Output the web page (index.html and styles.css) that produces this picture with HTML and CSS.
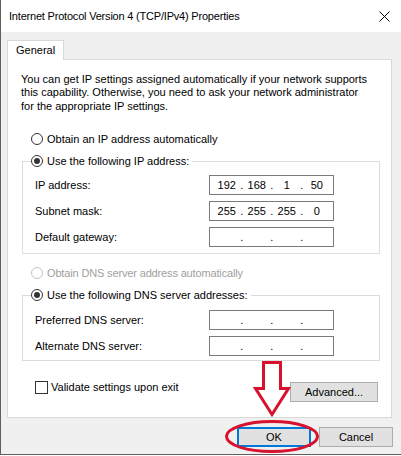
FILE: index.html
```html
<!DOCTYPE html>
<html lang="en">
<head>
  <meta charset="UTF-8">
  <title>Internet Protocol Version 4 (TCP/IPv4) Properties</title>
  <link rel="stylesheet" href="styles.css">
</head>
<body>

  <div class="window">
    <div class="titlebar">
      <span class="title">Internet Protocol Version 4 (TCP/IPv4) Properties</span>
      <svg class="close" width="11" height="11" viewBox="0 0 11 11">
        <path d="M0.5 0.5 L10.5 10.5 M10.5 0.5 L0.5 10.5" stroke="#000" stroke-width="1" fill="none"/>
      </svg>
    </div>

    <div class="client">
      <div class="tabs">
        <div class="tab">General</div>
      </div>

      <div class="panel">
        <p class="intro">You can get IP settings assigned automatically if your network supports<br>this capability. Otherwise, you need to ask your network administrator<br>for the appropriate IP settings.</p>

        <!-- IP address -->
        <label class="radio standalone"><span class="knob"></span>Obtain an IP address automatically</label>

        <fieldset class="group ip-group">
          <legend><label class="radio checked"><span class="knob"></span>Use the following IP address:</label></legend>
          <div class="row">
            <span class="label">IP address:</span>
            <div class="ipbox"><span>192</span><i>.</i><span>168</span><i>.</i><span>1</span><i>.</i><span>50</span></div>
          </div>
          <div class="row">
            <span class="label">Subnet mask:</span>
            <div class="ipbox"><span>255</span><i>.</i><span>255</span><i>.</i><span>255</span><i>.</i><span>0</span></div>
          </div>
          <div class="row">
            <span class="label">Default gateway:</span>
            <div class="ipbox"><span></span><i>.</i><span></span><i>.</i><span></span><i>.</i><span></span></div>
          </div>
        </fieldset>

        <!-- DNS -->
        <label class="radio standalone disabled dns-auto"><span class="knob"></span>Obtain DNS server address automatically</label>

        <fieldset class="group dns-group">
          <legend><label class="radio checked"><span class="knob"></span>Use the following DNS server addresses:</label></legend>
          <div class="row">
            <span class="label">Preferred DNS server:</span>
            <div class="ipbox"><span></span><i>.</i><span></span><i>.</i><span></span><i>.</i><span></span></div>
          </div>
          <div class="row">
            <span class="label">Alternate DNS server:</span>
            <div class="ipbox"><span></span><i>.</i><span></span><i>.</i><span></span><i>.</i><span></span></div>
          </div>
        </fieldset>

        <div class="panel-footer">
          <label class="check"><span class="box"></span>Validate settings upon exit</label>
          <button class="btn advanced">Advanced...</button>
        </div>
      </div>

      <div class="actions">
        <button class="btn default">OK</button>
        <button class="btn">Cancel</button>
      </div>
    </div>

    <!-- red markup drawn over the dialog -->
    <svg class="markup" width="401" height="456" viewBox="0 0 401 456">
      <polygon points="263.5,362.5 280.5,362.5 280.5,388.5 288.5,388.5 272,414.5 255.5,388.5 263.5,388.5"
               fill="none" stroke="#d8112c" stroke-width="3" stroke-linejoin="miter"/>
      <ellipse cx="272" cy="436.5" rx="45.5" ry="15" fill="none" stroke="#d8112c" stroke-width="3"/>
    </svg>
  </div>

</body>
</html>
```

FILE: styles.css
```css
* {
  box-sizing: border-box;
}

body {
  margin: 0;
  background: #fff;
  font-family: "Liberation Sans", Arial, sans-serif;
  font-size: 11px;
  color: #000;
}

.window {
  position: relative;
  width: 401px;
  height: 455px;
  background: #f0f0f0;
  border-left: 1px solid #5f5f5f;
  border-bottom: 1px solid #5f5f5f;
}

.titlebar {
  height: 32px;
  background: #fff;
  display: flex;
  align-items: center;
  justify-content: space-between;
  padding: 0 11px 0 8px;
}

.title {
  font-size: 11px;
  letter-spacing: -0.2px;
}

.client {
  padding: 8px 0 0 6px;
}

.tab {
  display: inline-block;
  position: relative;
  height: 20px;
  line-height: 19px;
  padding: 0 8px;
  margin-bottom: -1px;
  background: #fff;
  border: 1px solid #d9d9d9;
  border-bottom: none;
}

.tabs {
  display: flex;
}

.panel {
  width: 385px;
  height: 359px;
  background: #fff;
  border: 1px solid #d9d9d9;
}

.intro {
  margin: 13px 0 0 13px;
  line-height: 13.3px;
}

/* radio buttons */
.radio {
  display: flex;
  align-items: center;
  height: 13px;
  line-height: 13px;
  white-space: nowrap;
}

.radio .knob {
  width: 12px;
  height: 12px;
  margin-right: 4px;
  border: 1px solid #333;
  border-radius: 50%;
  background: #fff;
  position: relative;
}

.radio.checked .knob::after {
  content: "";
  position: absolute;
  left: 2px;
  top: 2px;
  width: 6px;
  height: 6px;
  border-radius: 50%;
  background: #333;
}

.radio.disabled {
  color: #a0a0a0;
  letter-spacing: -0.15px;
}

.radio.disabled .knob {
  border-color: #c4c4c4;
}

.standalone {
  margin: 20px 0 0 23px;
}

.dns-auto {
  margin-top: 13px;
}

/* group boxes */
.group {
  margin: 8px 11px 0 14px;
  padding: 6px 10px 6px 12px;
  border: 1px solid #dcdcdc;
}

.group legend {
  padding: 0 3px 0 0;
  margin-left: -4px;
  height: 15px;
  display: flex;
  align-items: center;
}

.dns-group {
  padding-top: 7px;
  padding-bottom: 4px;
}

.row {
  display: flex;
  align-items: center;
  height: 20px;
  margin-bottom: 6px;
}

.row:last-child {
  margin-bottom: 0;
}

.row .label {
  width: 174px;
}

.ipbox {
  width: 125px;
  height: 20px;
  border: 1px solid #7a7a7a;
  background: #fff;
  display: grid;
  grid-template-columns: 25.5px 4.5px 25.5px 4.5px 25.5px 4.5px 25.5px;
  align-items: center;
  padding-left: 4px;
  line-height: 18px;
}

.ipbox span,
.ipbox i {
  text-align: center;
  font-style: normal;
}

/* footer of the tab page */
.panel-footer {
  display: flex;
  justify-content: space-between;
  align-items: flex-start;
  margin: 20px 13px 0 27px;
}

.check {
  display: flex;
  align-items: center;
  height: 13px;
  line-height: 13px;
}

.check .box {
  width: 13px;
  height: 13px;
  margin-right: 3px;
  border: 1px solid #333;
  background: #fff;
}

.btn {
  height: 20px;
  padding: 0;
  background: #e1e1e1;
  border: 1px solid #adadad;
  font-family: inherit;
  font-size: 11px;
  color: #000;
}

.advanced {
  width: 88px;
  margin-top: 1px;
}

.actions {
  display: flex;
  justify-content: flex-end;
  gap: 8px;
  margin-top: 9px;
  padding-right: 8px;
}

.actions .btn {
  width: 74px;
}

.btn.default {
  border: 2px solid #0078d7;
}

.markup {
  position: absolute;
  left: -1px;
  top: 0;
  pointer-events: none;
}
```
